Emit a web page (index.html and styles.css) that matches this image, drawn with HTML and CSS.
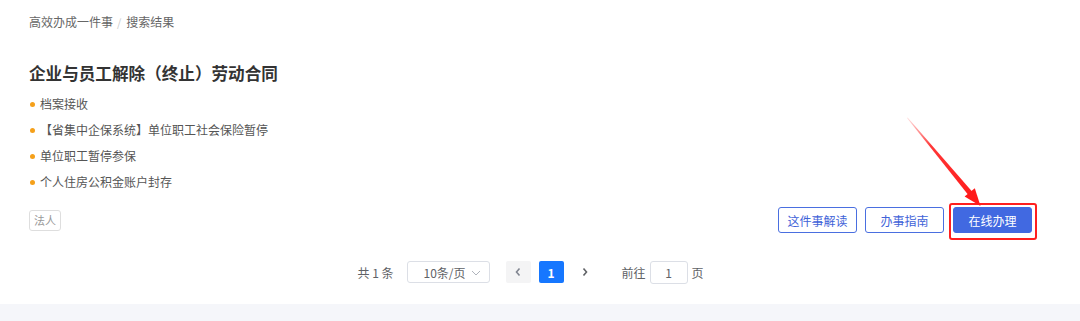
FILE: index.html
```html
<!DOCTYPE html>
<html lang="zh-CN">
<head>
<meta charset="utf-8">
<title>搜索结果</title>
<link rel="stylesheet" href="styles.css">
</head>
<body>
<div class="page">
  <div class="content">
    <nav class="breadcrumb">
      <span class="crumb">高效办成一件事</span>
      <span class="sep">/</span>
      <span class="crumb">搜索结果</span>
    </nav>
    <h1 class="title">企业与员工解除（终止）劳动合同</h1>
    <ul class="items">
      <li>档案接收</li>
      <li>【省集中企保系统】单位职工社会保险暂停</li>
      <li>单位职工暂停参保</li>
      <li>个人住房公积金账户封存</li>
    </ul>
    <div class="actions">
      <span class="tag">法人</span>
      <div class="buttons">
        <button class="btn btn-outline">这件事解读</button>
        <button class="btn btn-outline">办事指南</button>
        <button class="btn btn-primary highlight">在线办理</button>
      </div>
    </div>
    <div class="pager">
      <span class="total">共 1 条</span>
      <span class="size-select">10条/页<svg class="caret" width="10" height="6" viewBox="0 0 10 6"><path d="M1 1l4 4 4-4" fill="none" stroke="#b0b4bc" stroke-width="1"/></svg></span>
      <span class="pg-btn prev"><svg width="8" height="10" viewBox="0 0 8 10"><path d="M5.5 1.5L2.5 5l3 3.5" fill="none" stroke="#808590" stroke-width="1.6"/></svg></span>
      <span class="pg-num active">1</span>
      <span class="pg-btn next"><svg width="8" height="10" viewBox="0 0 8 10"><path d="M2.5 1.5L5.5 5l-3 3.5" fill="none" stroke="#606266" stroke-width="1.6"/></svg></span>
      <span class="goto">前往</span>
      <span class="goto-input">1</span>
      <span class="goto-unit">页</span>
    </div>
  </div>
  <div class="footer-band"></div>
  <svg class="annotation" width="1080" height="321" viewBox="0 0 1080 321">
    <defs>
      <linearGradient id="fade" gradientUnits="userSpaceOnUse" x1="907" y1="118" x2="975" y2="199">
        <stop offset="0" stop-color="#ff3030" stop-opacity="0.15"/>
        <stop offset="0.35" stop-color="#ff2020" stop-opacity="0.9"/>
        <stop offset="1" stop-color="#ff1a1a"/>
      </linearGradient>
    </defs>
    <polygon points="907,118 907.6,117.6 972.5,192 968.5,195.3" fill="url(#fade)"/>
    <polygon points="980.5,206 964.6,196.6 974.8,188.2" fill="#ff1a1a"/>
  </svg>
</div>
</body>
</html>
```

FILE: styles.css
```css
* { box-sizing: border-box; }
html, body { margin: 0; padding: 0; background: #ffffff; }
body {
  font-family: "Noto Sans CJK SC", "Noto Sans", "Liberation Sans", sans-serif;
  color: #333;
  width: 1080px;
  height: 321px;
  overflow: hidden;
}
.page { position: relative; width: 1080px; height: 321px; display: flex; flex-direction: column; }
.content { padding: 14px 48px 21px 29px; }

.breadcrumb { display: flex; align-items: center; font-size: 12px; line-height: 16px; color: #666; height: 16px; }
.breadcrumb .sep { color: #ccc; margin: 0 5px 0 4px; font-size: 11px; }

.title { margin: 31px 0 0; font-size: 16.6px; line-height: 24px; font-weight: 700; color: #333; }

.items { list-style: none; margin: 6px 0 0; padding: 0; }
.items li { position: relative; padding-left: 11px; font-size: 12px; line-height: 26px; height: 26px; color: #555; }
.items li::before {
  content: ""; position: absolute; left: 1px; top: 11px;
  width: 5px; height: 5px; border-radius: 50%; background: #f5a01a;
}

.actions { margin-top: 12px; display: flex; align-items: center; height: 26px; }
.tag {
  display: inline-flex; align-items: center; justify-content: center;
  width: 32px; height: 21px; border: 1px solid #dedede; border-radius: 3px;
  font-size: 11px; color: #999;
}
.buttons { margin-left: auto; display: flex; gap: 8px; }
.btn {
  width: 79px; height: 26px; border-radius: 3px; font-family: inherit; font-size: 12px;
  display: inline-flex; align-items: center; justify-content: center; padding: 0; cursor: pointer;
}
.btn-outline { background: #fff; border: 1px solid #4a6fe0; color: #3f63d8; }
.btn-primary { background: #4169e1; border: 1px solid #4169e1; color: #fff; margin-left: 1px; }
.highlight { position: relative; }
.highlight::after {
  content: ""; position: absolute; top: -5px; left: -5px; right: -6px; bottom: -8px;
  border: 2px solid #ff1f1f; border-radius: 3px;
}

.pager { margin-top: 28px; display: flex; align-items: center; justify-content: center; height: 22px; font-size: 12px; color: #606266; }
.total { margin-right: 13px; }
.size-select {
  position: relative; display: inline-flex; align-items: center; width: 83px; height: 22px;
  border: 1px solid #dcdfe6; border-radius: 3px; padding-left: 16px; color: #606266;
}
.caret { position: absolute; right: 8px; top: 8px; }
.pg-btn, .pg-num {
  display: inline-flex; align-items: center; justify-content: center;
  width: 25px; height: 22px; border-radius: 2px;
}
.prev { margin-left: 16px; background: #f4f4f5; }
.pg-num { margin-left: 8px; background: #1677ff; color: #fff; font-size: 12px; font-weight: 700; }
.next { margin-left: 9px; }
.goto { margin-left: 24px; }
.goto-input {
  display: inline-flex; align-items: center; justify-content: center;
  width: 38px; height: 23px; margin-left: 4px; border: 1px solid #dcdfe6; border-radius: 3px; color: #606266;
}
.goto-unit { margin-left: 4px; }

.footer-band { flex: 1; background: #f5f6fa; }

.annotation { position: absolute; left: 0; top: 0; pointer-events: none; }
```
